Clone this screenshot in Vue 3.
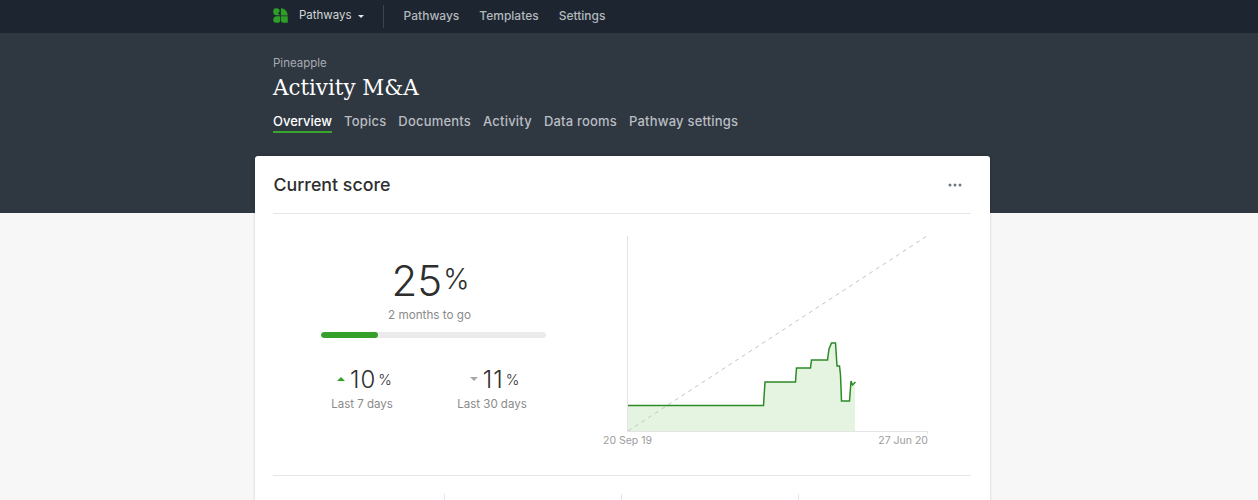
<template>
  <div class="page">
    <nav class="topbar">
      <div class="inner topbar-inner">
        <div class="brand">
          <svg class="logo" width="15" height="15" viewBox="0 0 16 16">
            <path fill="#2f9e27" d="M0.300 3a2.800 2.800 0 0 1 2.800-2.700h1.200a2.900 2.900 0 0 1 2.900 2.700 2.600 2.600 0 0 1-1.800 2.300v0.900h0.300a1.800 1.800 0 0 1 1.500 1.500v0.100h-3.800a3.200 3.200 0 0 1-3.100-2.400zM0.300 12.800a3.400 3.400 0 0 1 3.300-3.900h4v3.900a2.900 2.900 0 0 1-2.900 3h-1.400a3.100 3.100 0 0 1-3-3zM8.400 0.300c4 0 7 3.200 7.300 7.800h-7.300zM8.400 8.900h7.300v6.900h-4.400a2.900 2.900 0 0 1-2.900-2.900z"/>
          </svg>
          <span class="brand-name">Pathways</span>
          <span class="caret"></span>
        </div>
        <span class="divider"></span>
        <a class="top-link">Pathways</a>
        <a class="top-link">Templates</a>
        <a class="top-link">Settings</a>
      </div>
    </nav>
    <header class="hero">
      <div class="inner">
        <div class="org">Pineapple</div>
        <h1 class="title">Activity M&amp;A</h1>
        <div class="tabs">
          <a v-for="t in tabs" :key="t" class="tab" :class="{ active: t === 'Overview' }">{{ t }}</a>
        </div>
      </div>
    </header>
    <main class="content">
      <section class="card">
        <div class="card-head">
          <h2>Current score</h2>
          <svg width="14" height="4" viewBox="0 0 14 4"><circle cx="2" cy="2" r="1.500" fill="#6f7680"/><circle cx="7" cy="2" r="1.500" fill="#6f7680"/><circle cx="12" cy="2" r="1.500" fill="#6f7680"/></svg>
        </div>
        <div class="score-row">
          <div class="summary">
            <div class="big"><span>25</span><small>%</small></div>
            <div class="togo">2 months to go</div>
            <div class="bar"><div class="fill" :style="{ width: '25.500%' }"></div></div>
            <div class="stats">
              <div class="stat">
                <div class="val"><i class="tri up"></i><span>10</span><small>%</small></div>
                <div class="lab">Last 7 days</div>
              </div>
              <div class="stat">
                <div class="val"><i class="tri down"></i><span>11</span><small>%</small></div>
                <div class="lab">Last 30 days</div>
              </div>
            </div>
          </div>
          <div class="chart">
            <svg width="340" height="199" viewBox="0 0 340 199">
              <path d="M16 169.500H151.500L153 146H183.500L184.500 132H198.500L199.500 124H215.500L217 113L219.500 107H223.500L225 130H227.500L228.500 139L229.500 165H237.500L239 145L240.500 149L243 146V195H16Z" fill="#e5f4e1"/>
              <path d="M16 195L315 0" stroke="#c4c4c4" stroke-width="1" stroke-dasharray="4 4" fill="none"/>
              <path d="M16 169.500H151.500L153 146H183.500L184.500 132H198.500L199.500 124H215.500L217 113L219.500 107H223.500L225 130H227.500L228.500 139L229.500 165H237.500L239 145L240.500 149L243.500 146" stroke="#2d8a27" stroke-width="1.500" fill="none"/>
              <path d="M15.500 0V195.500H315.500V198" stroke="#e4e4e4" fill="none"/>
            </svg>
            <div class="axis"><span>20 Sep 19</span><span>27 Jun 20</span></div>
          </div>
        </div>
        <div class="metrics">
          <div class="metric"></div><div class="metric"></div><div class="metric"></div><div class="metric"></div>
        </div>
      </section>
    </main>
  </div>
</template>

<script setup>
const tabs = ['Overview', 'Topics', 'Documents', 'Activity', 'Data rooms', 'Pathway settings']
</script>

<style>
html, body { margin: 0; background: #f7f7f7; overflow: hidden; }
</style>

<style scoped>
.page { height: 500px; overflow: hidden; font-family: Inter, "Liberation Sans", sans-serif; color: #2e2e2e; position: relative; }
.inner { width: 712px; margin-left: 273px; }
.topbar { height: 33px; background: #1d2630; }
.topbar-inner { display: flex; align-items: center; height: 33px; }
.brand { display: flex; align-items: center; }
.logo { display: block; margin-right: 11px; margin-top: -3px; }
.brand-name { font-size: 11.500px; color: #d3d6d9; margin-top: -3px; }
.caret { width: 0; height: 0; border-left: 3.500px solid transparent; border-right: 3.500px solid transparent; border-top: 3px solid #e4e6e8; margin-left: 6px; }
.divider { width: 1px; height: 23px; background: #3c454f; margin: 0 20px 0 19px; }
.top-link { font-size: 12px; font-weight: 500; color: #b3b8bd; margin-right: 20px; margin-top: -2px; }
.hero { height: 180px; background: #2f3741; box-sizing: border-box; padding-top: 22px; }
.org { font-size: 11.500px; line-height: 16px; color: #a7acb2; }
.title { margin: 2px 0 0; font-family: "DejaVu Serif", serif; font-weight: 400; font-size: 21.400px; line-height: 30px; color: #fff; }
.tabs { display: flex; gap: 12px; margin-top: 8px; }
.tab { font-size: 13px; font-weight: 500; line-height: 20px; color: #b9bdc2; letter-spacing: .2px; border-bottom: 2px solid transparent; }
.tab.active { color: #fff; letter-spacing: 0; border-bottom-color: #3aa52d; }
.content { margin-top: -57px; margin-left: 255px; width: 735px; }
.card { height: 400px; background: #fff; border-radius: 3px; box-shadow: 0 0 3px rgba(0, 0, 0, .18); padding: 0 19px 0 18px; box-sizing: border-box; }
.card-head { height: 58px; display: flex; align-items: center; justify-content: space-between; border-bottom: 1px solid #e6e6ea; padding: 0 9px 0 0; box-sizing: border-box; }
.card-head h2 { margin: 0 0 0 .5px; font-size: 17.800px; font-weight: 450; color: #2e2e2e; }
.score-row { display: flex; height: 261px; border-bottom: 1px solid #e6e6ea; box-sizing: content-box; }
.summary { width: 320px; flex: none; display: flex; flex-direction: column; align-items: center; padding-top: 44px; box-sizing: border-box; }
.big { display: flex; align-items: flex-start; line-height: 46px; height: 46px; font-size: 42px; font-weight: 300; margin-left: -5px; }
.big small { font-size: 28px; margin-left: 1px; line-height: 42px; font-weight: 300; }
.togo { font-size: 11.700px; color: #8a8a8a; line-height: 16px; margin: 3px 0 0 -7px; }
.bar { width: 225px; height: 6px; margin: 9px 0 0 1px; border-radius: 3px; background: #ebebeb; overflow: hidden; flex: none; }
.fill { height: 100%; background: #35a12a; border-radius: 3px; }
.stats { display: flex; margin: 29px 0 0 -12px; width: 260px; }
.stat { width: 130px; display: flex; flex-direction: column; align-items: center; }
.val { display: flex; align-items: center; font-size: 24px; font-weight: 300; line-height: 26px; letter-spacing: 1px; margin-left: 5px; }
.val small { font-size: 14.500px; margin-left: 2px; font-weight: 300; letter-spacing: 0; }
.tri { width: 0; height: 0; border-left: 4px solid transparent; border-right: 4px solid transparent; margin-right: 5px; margin-top: -2px; }
.tri.up { border-bottom: 4px solid #35a12a; }
.tri.down { border-top: 4px solid #a8a8a8; }
.lab { font-size: 11.500px; color: #8a8a8a; line-height: 16px; margin-top: 3px; }
.chart { margin: 22px 0 0 19px; width: 340px; }
.chart svg { display: block; }
.axis { display: flex; justify-content: space-between; width: 325px; margin-left: -9px; font-size: 10.500px; line-height: 14px; color: #9c9c9c; margin-top: -1px; }
.metrics { display: flex; margin-top: 18px; height: 60px; }
.metric { flex: none; width: 177px; height: 60px; border-right: 1px solid #e6e6ea; box-sizing: border-box; }
.metric:first-child { width: 172px; }
.metric:last-child { border-right: 0; }
</style>
